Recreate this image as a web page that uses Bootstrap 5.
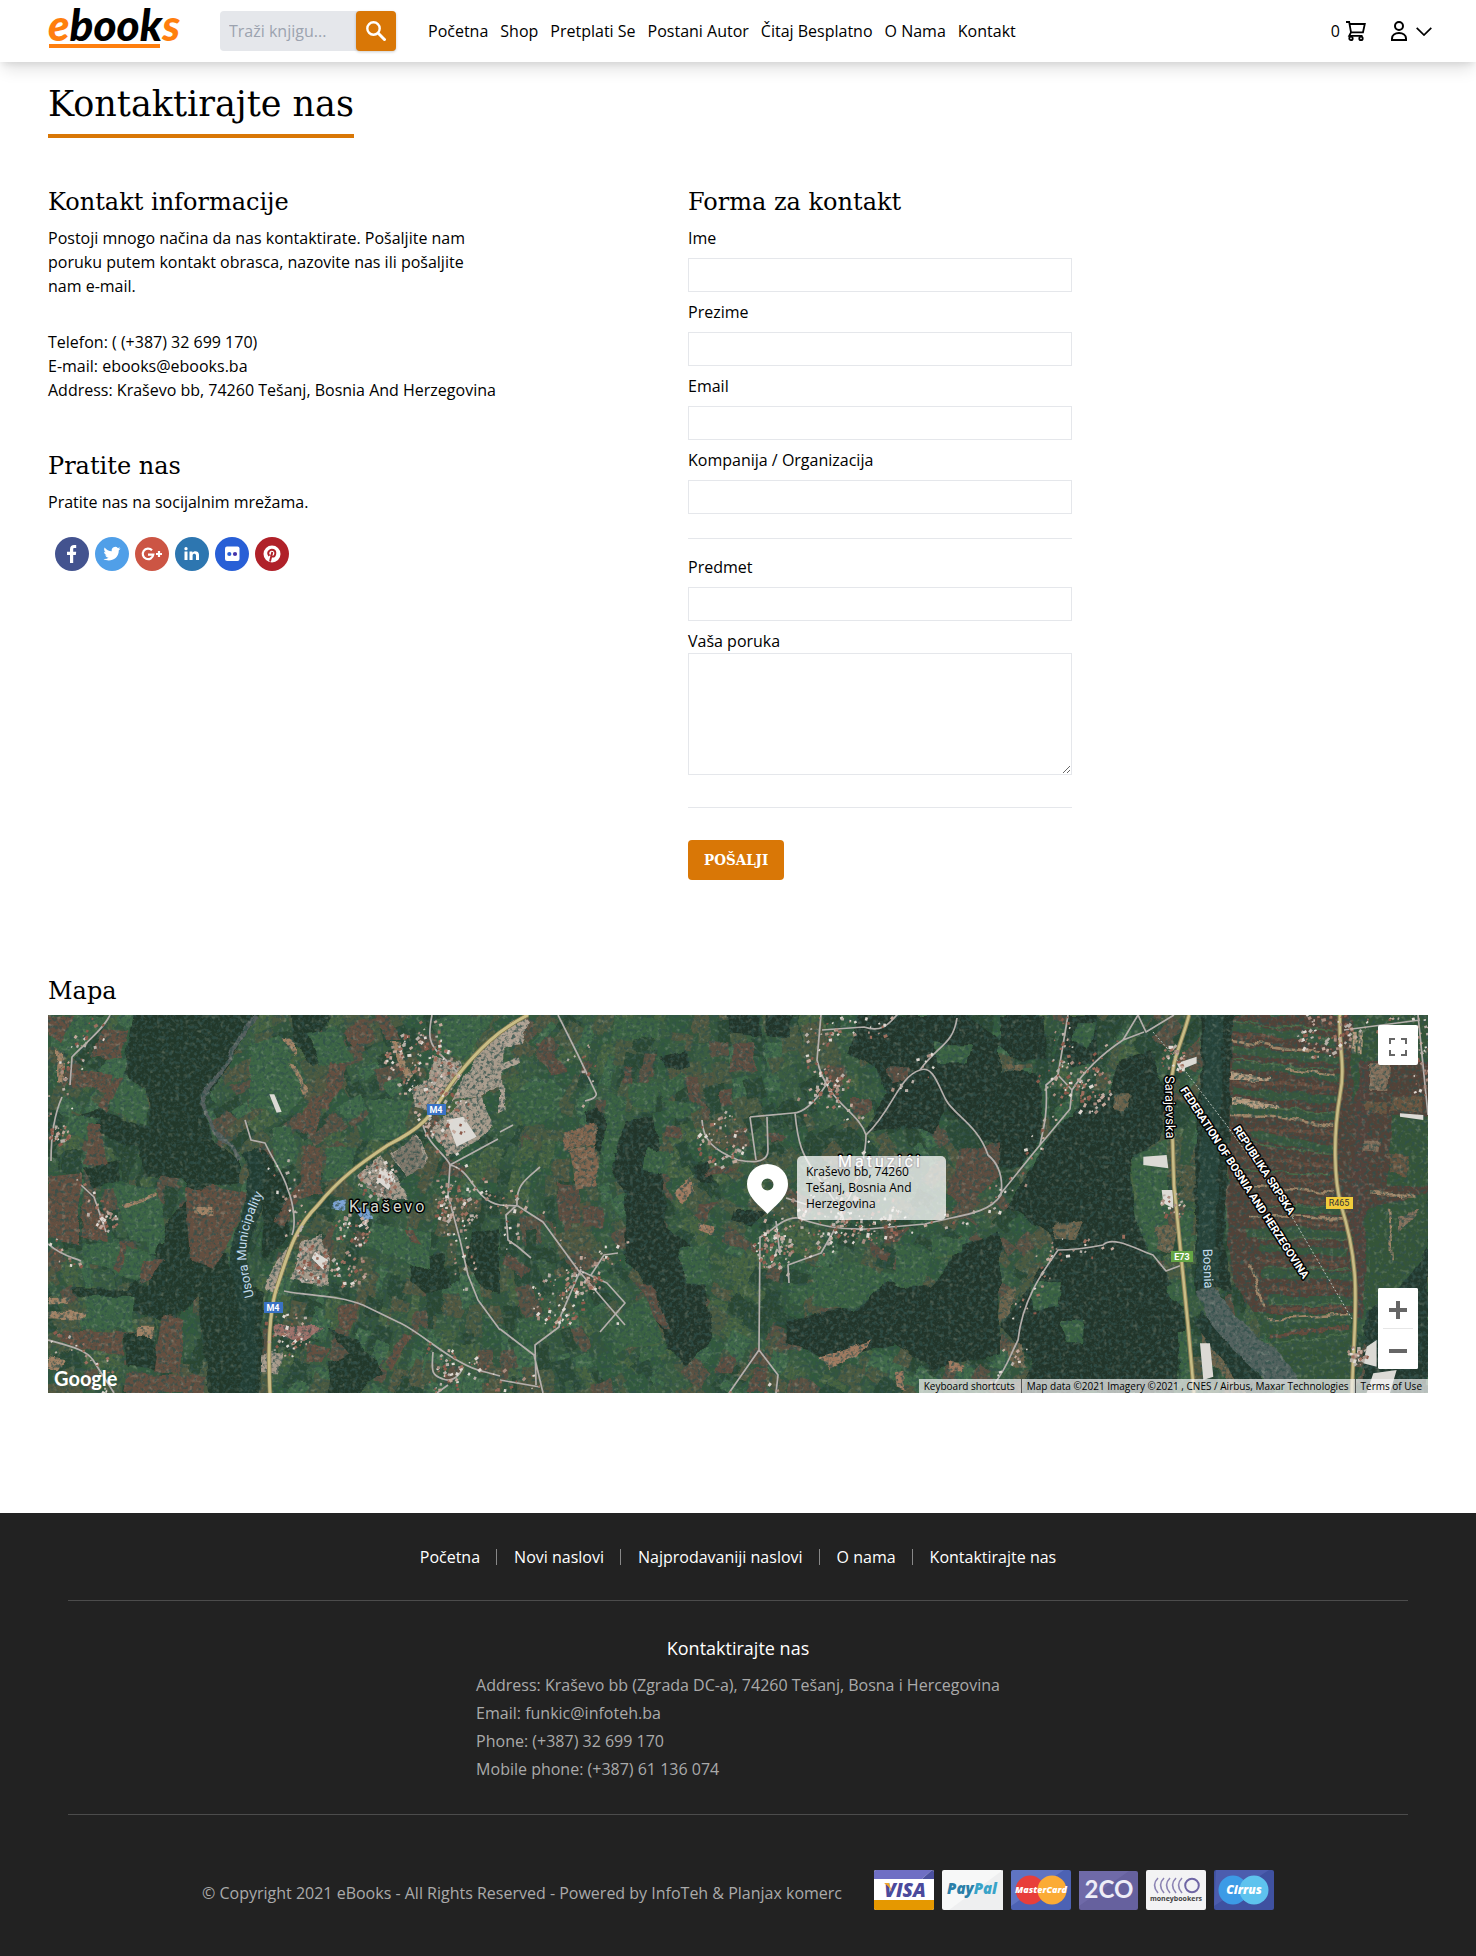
<!DOCTYPE html>
<html lang="bs">
<head>
<meta charset="utf-8">
<meta name="viewport" content="width=device-width, initial-scale=1">
<title>eBooks - Kontaktirajte nas</title>
<link href="https://cdn.jsdelivr.net/npm/bootstrap@5.3.0/dist/css/bootstrap.min.css" rel="stylesheet">
<style>
body{font-family:"Open Sans","Noto Sans",sans-serif;font-size:16px;line-height:24px;color:#000;background:#fff}
a{color:inherit;text-decoration:none}
.gutter{padding-left:48px;padding-right:48px}
.topbar{min-height:62px;box-shadow:0 10px 15px -3px rgba(0,0,0,.12),0 4px 6px -2px rgba(0,0,0,.08);background:#fff}
.logo{width:134px;height:62px;margin-right:38px}
.logo svg{display:block;overflow:visible}
.search{width:176px;height:40px;border-radius:4px;background:#e5e7eb;margin-right:32px}
.search input{width:136px;border:0;background:transparent;padding:0 9px;color:#000}
.search input::placeholder{color:#9ca3af;opacity:1}
.search button{width:40px;height:40px;border:0;border-radius:4px;background:#d97706;box-shadow:0 1px 3px rgba(0,0,0,.2)}
.menu{column-gap:12px}
.account{gap:24px;margin-right:-4px}
.basket{gap:6px}
.plain-btn{border:0;background:none;padding:0;color:inherit}
.serif,h1,h2{font-family:"DejaVu Serif",serif}
h1{font-size:35px;line-height:40px;font-weight:400;border-bottom:4px solid #d97706;padding-bottom:10px;margin:22px 0 48px}
h2{font-size:24px;line-height:32px;font-weight:400;margin:0 0 8px}
.cols{max-width:1280px}
.intro{max-width:440px;margin-bottom:32px}
.reach{margin-bottom:48px}
.social{gap:6px;margin:23px 0 0 7px}
.contact-form{max-width:384px}
.contact-form label{display:block}
.field{display:block;width:100%;height:34px;border:1px solid #e5e7eb;background:#fff;padding:0 8px;margin:8px 0}
.area{display:block;width:100%;height:122px;border:1px solid #e5e7eb;padding:8px}
.rule{border:0;border-top:1px solid #e5e7eb;opacity:1;margin:32px 0}
.rule-mid{margin:24px 0 16px}
.send{height:40px;border:0;border-radius:4px;background:#d97706;color:#fff;padding:0 16px;font-family:"DejaVu Serif Condensed","DejaVu Serif",serif;font-weight:700;font-size:15px}
.map-part{margin-top:95px;margin-bottom:120px}
.map-box{height:378px;background:#345139;overflow:hidden}
.map-box>.aerial{width:100%;height:100%}
.map-btn{width:40px;height:40px;border:0;background:#fff;padding:0}
.fs{top:10px;right:10px;border-radius:2px}
.zoomer{right:10px;bottom:24px;border-radius:2px;background:#fff;overflow:hidden}
.zoomer hr{margin:0 5px;opacity:1;border-color:#e6e6e6}
.pin{left:calc(50% + 9px);top:149px}
.bubble{left:calc(50% + 59px);top:141px;width:149px;height:64px;background:rgba(255,255,255,.75);border-radius:5px;padding:8px 9px;font-size:12px;line-height:16px}
.credit{right:0;bottom:0;height:14px;font-size:10px;line-height:14px;background:rgba(245,245,245,.7);padding:0 6px 0 5px}
.credit>*+*{border-left:1px solid #555;margin-left:6px;padding-left:5px}
.foot{background:#222;color:#aaa;padding:32px 68px 46px}
.foot-links a{color:#fff;padding:0 17px;position:relative}
.foot-links a+a::before{content:"";position:absolute;left:-1px;top:4px;height:16px;width:1px;background:#888}
.foot-rule{border:0;border-top:1px solid #4c4c4c;opacity:1;margin:31px 0 33px}
.foot h3{font-size:18px;line-height:28px;color:#fff;font-weight:400;margin:0 0 9px}
.foot address{line-height:28px;margin:0}
.foot-end{gap:32px;padding-top:22px}
.copy{padding-top:6px}
</style>
<script src="https://cdn.jsdelivr.net/npm/bootstrap@5.3.0/dist/js/bootstrap.bundle.min.js"></script>
</head>
<body>
<header class="topbar gutter d-flex flex-wrap align-items-center position-relative">
  <a href="#" class="logo" aria-label="ebooks">
    <svg width="134" height="62" viewBox="0 0 134 62"><text x="0" y="41" font-family="Lato,sans-serif" font-weight="900" font-style="italic" font-size="44"><tspan fill="#ff7f0e">e</tspan><tspan fill="#000">book</tspan><tspan fill="#ff7f0e">s</tspan></text><rect x="1" y="44" width="111" height="4" fill="#ff7f0e"/></svg>
  </a>
  <form class="search d-flex" role="search">
    <input type="text" placeholder="Traži knjigu..." aria-label="Traži knjigu">
    <button type="button" aria-label="Traži" class="d-flex align-items-center justify-content-center p-0"><svg width="20" height="20" viewBox="0 0 20 20" fill="none" stroke="#fff" stroke-width="2.400"><circle cx="7.500" cy="7.500" r="6.200"/><path d="M12 12l7.500 7.500" stroke-width="3"/></svg></button>
  </form>
  <nav class="menu d-flex flex-wrap me-auto">
    <a href="#">Početna</a><a href="#">Shop</a><a href="#">Pretplati Se</a><a href="#">Postani Autor</a><a href="#">Čitaj Besplatno</a><a href="#">O Nama</a><a href="#">Kontakt</a>
  </nav>
  <div class="account d-flex align-items-center">
    <a href="#" class="basket d-flex align-items-center" aria-label="Korpa">
      <span>0</span>
      <svg width="20" height="20" viewBox="0 0 20 20" fill="none" stroke="#000" stroke-width="1.800"><path d="M0 1H3.200L5 11.300M3.500 3H18.800L17 11.300H5L3.200 14.800H16.500"/><circle cx="5" cy="17.400" r="1.700"/><circle cx="15" cy="17.400" r="1.700"/></svg>
    </a>
    <button type="button" class="plain-btn d-flex align-items-center" aria-label="Moj račun">
      <svg width="18" height="20" viewBox="0 0 18 20" fill="none" stroke="#000" stroke-width="2"><circle cx="9" cy="5" r="4"/><path d="M2 19v-1.500C2 14 5 12 9 12s7 2 7 5.500V19z"/></svg>
      <svg class="ms-2" width="16" height="9" viewBox="0 0 16 9" fill="none" stroke="#000" stroke-width="1.700"><path d="M.7.8L8 8 15.300.8"/></svg>
    </button>
  </div>
</header>

<main class="gutter">
  <h1 class="d-table">Kontaktirajte nas</h1>
  <div class="row g-0 cols">
    <section class="col-md-6">
      <h2>Kontakt informacije</h2>
      <p class="intro">Postoji mnogo načina da nas kontaktirate. Pošaljite nam poruku putem kontakt obrasca, nazovite nas ili pošaljite nam e-mail.</p>
      <p class="reach">Telefon: ( (+387) 32 699 170)<br>E-mail: ebooks@ebooks.ba<br>Address: Kraševo bb, 74260 Tešanj, Bosnia And Herzegovina</p>
      <h2>Pratite nas</h2>
      <p class="mb-0">Pratite nas na socijalnim mrežama.</p>
      <div class="social d-flex">
        <a href="#" aria-label="Facebook" class="d-flex"><svg width="34" height="34" viewBox="0 0 34 34"><circle cx="17" cy="17" r="17" fill="#43538f"/><path fill="#fff" d="M15 26v-8h-3v-3.300h3v-2.400C15 9.300 16.800 8 19 8h2.200v3h-1.700c-1 0-1.300.5-1.300 1.400v2.300h3l-.4 3.300h-2.600v8z"/></svg></a>
        <a href="#" aria-label="Twitter" class="d-flex"><svg width="34" height="34" viewBox="0 0 34 34"><circle cx="17" cy="17" r="17" fill="#509fe8"/><path fill="#fff" d="M25.500 11.500c-.6.300-1.300.5-2 .6.700-.5 1.200-1.100 1.500-1.900-.7.400-1.400.7-2.200.8a3.500 3.500 0 0 0-6 3.200c-2.900-.1-5.500-1.500-7.200-3.700-.9 1.600-.5 3.600 1.100 4.700-.6 0-1.100-.2-1.600-.4 0 1.700 1.200 3.100 2.800 3.400-.5.100-1 .2-1.600.1.500 1.400 1.700 2.400 3.300 2.400A7 7 0 0 1 8.500 22c5.500 3.500 15.300.8 15.300-8.700.7-.5 1.300-1.100 1.700-1.800z"/></svg></a>
        <a href="#" aria-label="Google Plus" class="d-flex"><svg width="34" height="34" viewBox="0 0 34 34"><circle cx="17" cy="17" r="17" fill="#cc5544"/><g fill="none" stroke="#fff" stroke-width="2.200"><path d="M17 13.300a5.300 5.300 0 1 0 1.300 4.300h-5.300"/><path d="M24 14v6M21 17h6"/></g></svg></a>
        <a href="#" aria-label="LinkedIn" class="d-flex"><svg width="34" height="34" viewBox="0 0 34 34"><circle cx="17" cy="17" r="17" fill="#2d76b0"/><path fill="#fff" d="M9.500 14.500h3V23h-3zM11 10a1.600 1.600 0 1 1 0 3.300A1.600 1.600 0 0 1 11 10zM14.500 14.500h2.900v1.300c1.500-2.400 6.600-2 6.600 2V23h-3v-4.700c0-2.200-3.400-2.200-3.400 0V23h-3.100z"/></svg></a>
        <a href="#" aria-label="Flickr" class="d-flex"><svg width="34" height="34" viewBox="0 0 34 34"><circle cx="17" cy="17" r="17" fill="#285fd6"/><rect x="10" y="9.500" width="14.500" height="14.500" rx="2" fill="#fff"/><circle cx="14.300" cy="17" r="2.100" fill="#285fd6"/><circle cx="20" cy="17" r="2.100" fill="#43a"/></svg></a>
        <a href="#" aria-label="Pinterest" class="d-flex"><svg width="34" height="34" viewBox="0 0 34 34"><circle cx="17" cy="17" r="17" fill="#b02129"/><circle cx="17" cy="17" r="8.500" fill="#fff"/><path fill="none" stroke="#b02129" stroke-width="1.900" d="M14.300 18.800c-3-3.900 1-6.900 4-5.800 3.300 1.200 2.200 6.700-.7 6.600-1.100 0-1.700-.8-1.500-1.500M17.300 15l-2.300 9.500"/></svg></a>
      </div>
    </section>
    <section class="col-md-6">
      <h2>Forma za kontakt</h2>
      <form class="contact-form">
        <label for="ime">Ime</label><input class="field" id="ime" type="text">
        <label for="prezime">Prezime</label><input class="field" id="prezime" type="text">
        <label for="email">Email</label><input class="field" id="email" type="email">
        <label for="firma">Kompanija / Organizacija</label><input class="field mb-0" id="firma" type="text">
        <hr class="rule rule-mid">
        <label for="predmet">Predmet</label><input class="field" id="predmet" type="text">
        <label for="poruka">Vaša poruka</label><textarea class="area" id="poruka"></textarea>
        <hr class="rule">
        <button type="button" class="send">POŠALJI</button>
      </form>
    </section>
  </div>

  <section class="map-part">
    <h2>Mapa</h2>
    <div class="map-box position-relative">
      <svg class="aerial" viewBox="0 0 1380 378" preserveAspectRatio="xMidYMid slice" aria-label="Mapa Kraševa">
        <defs>
          <filter id="rough" x="0" y="0" width="100%" height="100%"><feTurbulence type="fractalNoise" baseFrequency=".05" numOctaves="3" seed="4" result="n"/><feDisplacementMap in="SourceGraphic" in2="n" scale="9" xChannelSelector="R" yChannelSelector="G"/></filter>
          <filter id="grain" x="0" y="0" width="100%" height="100%"><feTurbulence type="fractalNoise" baseFrequency=".28" numOctaves="3" seed="2"/><feColorMatrix values="0 0 0 0 .03  0 0 0 0 .08  0 0 0 0 .07  2.600 2.600 0 0 -2.450"/></filter>
          <filter id="glint" x="0" y="0" width="100%" height="100%"><feTurbulence type="fractalNoise" baseFrequency=".22" numOctaves="2" seed="15"/><feColorMatrix values="0 0 0 0 .48  0 0 0 0 .52  0 0 0 0 .42  2 2 0 0 -2.100"/></filter>
          <path id="usora" d="M206 282C198 250 196 235 201 215S212 188 217 172"/>
        </defs>
        <rect width="1380" height="378" fill="#34563c"/>

        <g filter="url(#rough)">
          <g id="parcels"></g>
          <!-- western part -->
          <g transform="translate(-48 -55) scale(.3333)">
            <path fill="#22382b" d="M400 150H780L700 290 640 380 600 430 640 540 720 600 720 670 560 690 540 650 430 650 420 560 330 540 300 510 210 470 300 450 450 500 440 380 370 340zM870 150H1010L960 210 990 270 1060 300 940 320 880 240zM490 800 560 720 570 900 680 880 700 960 790 1000 780 1310H630L600 1080 590 1000 560 1050 480 1080 380 1040 220 1000 220 980 380 990 400 960 440 980zM370 1120 460 1110 480 1230 380 1220zM1240 900 1330 880 1350 980 1280 1000 1230 960zM980 1100 1080 1150 1150 1240 1060 1310 980 1299 990 1210 1050 1180zM1420 820 1500 800V1000L1440 980 1400 900zM250 620 350 600 350 660 280 690zM780 560 860 640 870 820 790 900z"/>
            <path fill="#3c6644" d="M150 170 330 165 310 190 220 290 150 260zM350 350 440 380 440 490 330 450zM210 460 300 480 260 540 190 520zM750 250 850 230 910 400 860 470 750 440zM1110 420 1230 420 1220 540 1120 540zM820 500 880 500 890 610 830 630zM980 560 1070 560 1060 650 970 660zM330 670 470 680 500 850 390 840zM250 850 360 840 350 930 250 910zM1020 760 1060 780 1030 850 1000 840zM1110 790 1290 820 1290 930 1100 860zM260 1010 400 1010 400 1110 250 1110zM380 860 470 890 400 960 340 940zM920 220 1010 200 1060 300 960 320zM1310 170 1480 165 1400 300 1310 280z"/>
            <path fill="#655041" d="M310 205 385 210 365 295 270 290zM215 320 335 345 320 400 210 375zM340 350 370 350 320 460 300 440zM265 495 300 495 320 610 255 610zM990 310 1045 310 990 450 960 440zM930 410 980 410 940 530 890 500zM1030 220 1100 180 1130 240 1060 270zM1120 165 1160 165 1200 240 1160 240zM555 685 640 680 740 700 690 840 640 930 570 900zM910 560 960 560 970 700 900 720 850 800 820 790 900 660zM145 650 240 640 240 850 145 830zM255 700 320 770 320 840 245 830zM360 850 380 850 360 940 340 920zM430 900 490 900 450 960 410 960zM490 1060 550 1080 540 1240 460 1230zM190 1110 370 1120 370 1190 180 1150zM1210 1120 1235 1130 1180 1230 1160 1210zM1210 810 1240 810 1270 850 1240 850zM920 1150 990 1160 970 1210 920 1200zM150 170 220 170 180 250 145 230zM380 1240 620 1250 610 1299 370 1299zM1020 1040 1080 1030 1050 1110 1020 1100z"/>
            <path fill="#a18265" d="M168 275 190 275 188 375 168 370zM1170 245 1195 245 1240 350 1225 370zM850 235 875 240 890 290 870 280zM868 310 885 315 925 400 915 410zM580 740 640 740 640 765 580 760zM410 1100 460 1100 460 1135 410 1130zM145 1055 260 1055 255 1080 145 1075zM370 735 470 700 470 710 380 745zM150 1010 200 1010 200 1030 145 1030zM150 1190 190 1200 170 1230 145 1230z"/>
            <path fill="#a89b8c" d="M1300 290 1380 310 1390 340 1350 400 1290 450 1240 440 1240 390 1290 350zM1440 270 1510 200V380L1350 430zM1380 430 1440 400 1480 500 1420 550 1340 590 1320 540 1290 510zM1170 580 1250 530 1290 600 1220 650zM1070 650 1140 590 1230 720 1150 720zM900 850 960 830 990 900 980 980 870 960zM830 900 870 850 830 1000 790 990zM780 1180 850 1180 840 1240 780 1240z"/>
            <path fill="#7e776b" d="M1180 580 1240 530 1280 610 1220 650zM1130 650 1180 690 1150 710 1110 680zM930 880 980 880 980 930 920 920z"/>
            <path fill="#7ba3d6" d="M1060 740 1110 750 1120 780 1090 780zM1000 730 1030 720 1030 750 990 745z"/>
            <path fill="#9d6f69" d="M830 1090 970 1100 910 1140 830 1130z"/>
            <path fill="none" stroke="#56615f" stroke-width="13" d="M765 165 690 290 625 380 605 430 640 510 700 560 720 600"/>
            <path fill="none" stroke="#213d30" stroke-width="48" stroke-linejoin="round" d="M750 570 770 640 760 740 720 850 715 930 745 1040 745 1299"/>
          </g>
          <!-- central part -->
          <g transform="translate(452 -55) scale(.3333)">
            <path fill="#20362b" d="M1080 165H1400L1500 240V560L1430 530 1340 440 1300 520 1180 500 1100 520 1160 400 1140 330 1040 280zM380 480 460 470 480 600 500 790 600 900 640 1130 560 1220 500 1160 430 960 370 880 380 700 330 620zM1380 860 1500 820V1180L1300 1230 1180 1150 1000 1200 860 1150 860 1080 1060 1040 1100 960 1290 980zM680 165 780 165 790 230 690 220zM480 290 560 270 570 320 500 320zM580 620 630 610 640 670 590 660zM250 460 290 440 340 480 300 580zM700 750 800 750 760 800 690 780zM800 165 880 165 870 230 800 230z"/>
            <path fill="#3b6443" d="M30 400 180 370 190 480 70 500zM340 170 480 180 470 230 340 240zM320 390 380 410 350 590 310 580zM380 360 470 370 470 450 390 440zM500 420 610 440 540 480 500 470zM440 560 520 580 500 640 430 630zM540 870 620 850 640 980 560 970zM1190 850 1300 880 1270 980 1180 980zM940 930 1070 900 1170 960 1060 1050 940 1040zM1300 250 1420 250 1400 310 1310 310zM60 1080 180 1060 170 1110 60 1140zM330 1070 460 1000 480 1150 340 1180zM870 970 960 970 910 1040 870 1030zM1290 830 1390 830 1390 880 1300 890zM470 380 550 330 570 370 490 430zM420 1170 500 1150 500 1180 420 1210z"/>
            <path fill="#5f4e3f" d="M105 250 140 250 200 340 160 350zM370 330 400 320 400 370 370 370zM550 350 590 350 600 420 570 430zM660 400 690 390 700 430 660 430zM500 490 550 500 550 540 490 530zM600 730 660 730 610 780 580 770zM1160 330 1230 320 1220 360 1170 370zM1050 420 1110 420 1110 460 1060 460zM170 670 240 680 240 790 180 780zM250 740 310 740 310 800 250 800zM400 970 460 970 510 1110 490 1110 430 1000zM1150 810 1230 800 1180 850 1150 850zM1110 850 1170 880 1160 900 1120 890zM640 620 720 620 690 640 610 650zM20 880 90 930 70 950 10 910zM700 250 760 250 770 330 690 340zM1380 570 1500 550V650L1380 740 1340 700zM760 1230 800 1230 800 1299 740 1299zM800 520 860 530 850 550 810 550zM660 1190 710 1180 700 1240 640 1240z"/>
            <path fill="#84664f" d="M190 520 290 490 290 545 200 570zM210 570 290 550 290 680 225 690z"/>
            <path fill="#a07a60" d="M520 700 570 650 590 690 540 730zM590 790 650 800 640 825 590 810zM960 1190 1110 1140 1070 1190 990 1230zM1185 1240 1210 1235 1220 1290 1190 1280zM1345 1205 1390 1220 1390 1240 1350 1240z"/>
            <path fill="#b0a294" d="M0 210 70 170 90 190 60 250 0 260zM5 310 65 285 70 300 10 330zM0 380 12 380 20 450 0 460z"/>
          </g>
          <!-- eastern part with the Bosna river -->
          <g transform="translate(952 -55) scale(.3333)">
            <path fill="#20362b" d="M0 165H130L140 300 60 310 0 260zM0 330 110 340 130 400 120 540 60 620 0 620zM130 560 220 450 330 400 360 300 450 270 500 400 480 540 390 590 400 740 440 880 160 880 150 820 20 740zM160 880 300 850 420 870 500 940 520 1000 560 1080 520 1299H60L100 1200 0 1100 100 960zM200 165H290L290 300 210 330 190 280zM600 165 700 165 690 480 670 830 700 1000 640 980 590 1000 580 700 600 300z"/>
            <path fill="#3b6443" d="M230 190 290 190 270 270 220 240zM390 590 500 540 510 860 440 880zM180 1080 250 1080 250 1150 200 1150zM90 970 180 960 170 1040 100 1050zM540 760 580 750 570 880 545 880zM170 440 220 400 210 470 170 490zM500 980 550 960 560 1050 510 1020zM530 1110 580 1110 580 1260 540 1260z"/>
            <path fill="#6e634b" d="M345 400 390 400 370 450 340 440zM170 790 250 780 220 840 160 840zM460 800 540 790 520 880 470 860zM20 1150 60 1150 80 1220 30 1220zM5 1010 40 980 30 1060 0 1090zM10 310 80 320 60 340 20 330zM600 1070 700 1190 670 1250 610 1180zM680 1210 720 1200 800 1299H670z"/>
            <path fill="#524338" d="M700 165H1284V830H1050L1060 1060H760L700 960 680 800 690 400z"/>
            <path fill="#345539" d="M1050 165H1284V300H1110L1060 420zM1180 470 1284 470V680H1160zM1080 740 1284 700V870L1100 1070zM760 1060 1060 1060 1050 1299H900z"/>
            <g fill="none" stroke="#38593d" stroke-width="24"><path d="M700 200 1010 245M700 270 1020 300M700 320 860 325 1020 360M700 395 1010 420M690 450 1010 475M750 520 1000 570M860 750 1030 750M740 820 1050 820M780 860 1040 880M780 940 1060 950M800 1020 1060 1020M790 1090 1060 1070M820 1170 1060 1130M870 1230 1050 1200"/></g>
            <g fill="none" stroke="#664b3d" stroke-width="12"><path d="M700 225 850 235M700 365 1010 385M690 505 1000 520M700 590 1000 620M690 650 1000 670M760 720 1000 730M760 790 1040 790M780 905 1040 910M800 985 1050 985M810 1050 1050 1040M810 1130 1050 1100"/></g>
            <g fill="none" stroke="#496b47" stroke-width="5"><path d="M700 185 1000 215M700 300 1010 330M700 435 1010 460M740 545 1000 585M700 630 990 645M760 735 1000 740M770 835 1040 835M790 925 1050 930M800 1035 1050 1030M820 1150 1050 1120"/></g>
            <g fill="none" stroke="#a08568" stroke-width="8"><path d="M695 348 810 358M695 243 960 278M850 322 1010 348M690 465 820 468 1000 503M740 680 1000 696M750 768 1030 772M800 1080 1050 1062M750 910 790 1040M1110 700 1250 706M1170 740 1178 910"/></g>
            <path fill="#b59a7e" d="M690 418 838 432 838 445 690 440zM695 340 810 350 810 360 695 356zM1055 215H1067V280H1055zM1073 215H1085V280H1073z"/>
            <path fill="#54433a" d="M1080 300H1110L1090 1080H1070L1050 700z"/>
            <path fill="#85705b" d="M1110 310 1170 310 1165 390 1110 390zM1090 545 1140 545 1135 575 1090 575zM1200 770 1260 750 1200 820z"/>
            <path fill="#6b5540" d="M1170 410 1270 410 1270 450 1170 460zM1095 420 1160 430 1160 460 1095 450zM1160 580 1230 590 1220 650 1170 640z"/>
            <path fill="none" stroke="#284339" stroke-width="60" stroke-linejoin="round" d="M640 150 635 480 620 760 620 960"/>
            <path fill="#52625f" d="M590 990 640 980 700 1060 790 1140 860 1200 900 1270 830 1280 760 1230 690 1170 630 1100z"/>
            <path fill="#22392f" d="M600 1050 720 1190 830 1299H740L650 1180 590 1100zM1284 860V1299H1250L1090 1290 1100 1060 1220 960z"/>
          </g>
        </g>
        <rect width="1380" height="378" filter="url(#glint)" opacity=".3"/>
        <rect width="1380" height="378" filter="url(#grain)" opacity=".75"/>

        <!-- large roofs and sheds -->
        <g fill="#dcdad5">
          <path transform="translate(-48 -55) scale(.3333)" d="M1340 480 1390 470 1430 530 1370 560zM1140 630 1185 650 1165 690 1130 660zM945 875 985 900 970 930 935 895zM808 403 823 403 845 455 830 458z"/>
          <path transform="translate(952 -55) scale(.3333)" d="M430 590 500 585 505 625 430 615zM485 690 520 690 520 745 490 730zM1100 1160 1130 1140 1130 1220 1090 1210zM1120 1240 1190 1230 1170 1299H1100zM600 1150 630 1150 640 1250 610 1260zM530 310 590 290 590 310 540 330zM1200 460 1270 465 1270 480 1200 470z"/>
        </g>

        <!-- roads -->
        <g fill="none" stroke-linejoin="round">
          <g id="lanes" stroke="#b5afac" stroke-width="1.700">
            <path d="M62 0C55 15 35 30 24 42L22 70M14 82C6 100 3 120 3 146M33 170 46 182 58 217M0 229C15 242 25 242 33 246M0 325C25 332 38 335 45 345L66 378M197 105 203 125 217 128C225 145 236 160 240 175 246 190 248 210 244 220"/>
            <path d="M384 0C380 20 380 30 395 42L412 60M375 110C380 130 400 142 402 150L450 124M402 150 400 180 412 225 420 260 430 285 452 315M402 150C425 155 425 185 452 190M236 276C260 281 290 280 315 290L350 307C370 315 400 345 430 355L452 361M385 337C383 360 385 360 395 364S412 360 415 352M389 378 400 370"/>
            <path d="M510 0 530 40 548 78Q550 83 537 86M452 190 470 191 495 207 530 255 577 310M533 254 513 300 511 312 487 330 488 370M452 314 486 340 495 378M452 365 492 372M533 256 559 268 577 288 552 317M543 260 556 240 570 238M469 190C468 170 477 165 492 152M469 190 458 200 460 225 470 232 483 243M452 117 465 110"/>
            <path d="M773 0 769 45C780 90 810 95 818 120 818 140 812 160 800 185L792 205M774 15 816 12C840 20 845 0 855 -5M909 3C905 30 890 30 872 55 850 62 845 95 818 120M872 55C885 50 890 70 898 85S930 110 940 140C952 150 955 165 953 180 940 200 910 200 877 209L820 214C790 215 770 210 750 203 735 201 720 220 712 222L711 335 681 378M711 335 730 360 728 378M778 70C765 90 755 98 745 98L702 102M702 102 708 145M719 102 720 135C720 150 700 147 690 145 665 135 655 125 654 105M747 98C750 130 755 140 765 155L793 195 797 210M787 214 773 238 740 250 741 268M728 206 732 240M738 183 760 190"/>
            <path d="M1020 0 1010 60 998 70C1000 100 995 115 992 130L950 182M1010 60 1024 75 1022 94 992 130M1024 75C1040 50 1060 35 1075 25L1090 0 1098 17 1126 0M1096 17 1075 25M947 368C960 350 960 345 970 325 975 280 1000 250 1010 235 1025 235 1045 232 1055 230 1065 220 1090 235 1105 240L1118 256 1134 250M1296 15 1372 5M1370 0 1380 100"/>
          </g>
          <g stroke="#8c8156" stroke-width="4.500"><path id="m4" d="M222 378C220 340 221 300 228 275 240 240 245 215 270 190 290 165 310 150 340 130 390 105 385 90 410 60 430 35 450 15 480 0"/><path id="e73" d="M1141 0C1135 25 1123 45 1123 75L1126 170 1140 310 1146 378"/><path id="r465" d="M1292 0C1290 30 1298 50 1292 80 1285 120 1286 165 1293 190 1315 260 1306 300 1304 378"/></g>
          <g stroke="#c9bd86" stroke-width="2.500"><use href="#m4"/><path d="M222 378C220 340 221 300 228 275 240 240 245 215 270 190 290 165 310 150 340 130 390 105 385 90 410 60 430 35 450 15 480 0M1141 0C1135 25 1123 45 1123 75L1126 170 1140 310 1146 378M1292 0C1290 30 1298 50 1292 80 1285 120 1286 165 1293 190 1315 260 1306 300 1304 378"/></g>
          <path d="M1105 17 1125 40 1180 112 1243 200 1304 304" stroke="#b8c0b8" stroke-dasharray="2 2"/>
        </g>
        <g id="houses"></g>

        <!-- road shields -->
        <g font-family="Roboto,sans-serif" font-size="9" font-weight="700" fill="#fff" text-anchor="middle">
          <rect x="379" y="89" width="19" height="11" fill="#3a72c4"/><text x="388" y="98">M4</text>
          <rect x="216" y="287" width="19" height="11" fill="#3a72c4"/><text x="225" y="296">M4</text>
          <rect x="1123" y="236" width="22" height="11" fill="#65a544"/><text x="1134" y="245">E73</text>
          <rect x="1278" y="182" width="27" height="12" fill="#f2cc3b"/><text x="1291" y="191" fill="#333" font-weight="400">R465</text>
        </g>

        <!-- place labels -->
        <g font-family="Roboto,sans-serif" fill="#fff" stroke="#000" stroke-width="3" stroke-linejoin="round" paint-order="stroke">
          <text x="301" y="197" font-size="16" letter-spacing="3" fill="#d8d8d0">Kraševo</text>
          <text x="790" y="152" font-size="16" letter-spacing="3">Matuzići</text>
          <text transform="translate(1117 61) rotate(89)" font-size="13">Sarajevska</text>
          <text transform="translate(1132 75) rotate(57)" font-size="11" font-weight="700">FEDERATION OF BOSNIA AND HERZEGOVINA</text>
          <text transform="translate(1185 114) rotate(57)" font-size="11" font-weight="700">REPUBLIKA SRPSKA</text>
        </g>
        <g font-family="Roboto,sans-serif" fill="#c3dcec" stroke="#27443c" stroke-width="2" paint-order="stroke">
          <text font-size="13"><textPath href="#usora">Usora Municipality</textPath></text>
          <text transform="translate(1155 234) rotate(88)" font-size="13">Bosnia</text>
        </g>
        <text x="6" y="371" font-family="Lato,sans-serif" font-size="20" font-weight="700" fill="#fff">Google</text>
      </svg>
      <svg class="pin position-absolute" width="41" height="50" viewBox="0 0 41 50"><path fill="#fff" fill-rule="evenodd" d="M20.500 50C12 41 0 33 0 20a20.500 20 0 0 1 41 0C41 33 29 41 20.500 50zM20.500 14.500a6 6 0 1 0 0 12 6 6 0 0 0 0-12z"/></svg>
      <div class="bubble position-absolute">Kraševo bb, 74260 Tešanj, Bosnia And Herzegovina</div>
      <button type="button" class="map-btn fs position-absolute" aria-label="Cijeli ekran"><svg width="18" height="18" viewBox="0 0 18 18" fill="none" stroke="#666" stroke-width="2"><path d="M1 6V1h5M12 1h5v5M17 12v5h-5M6 17H1v-5"/></svg></button>
      <div class="zoomer position-absolute d-flex flex-column">
        <button type="button" class="map-btn" aria-label="Uvećaj"><svg width="18" height="18" viewBox="0 0 18 18" fill="none" stroke="#666" stroke-width="4"><path d="M9 0v18M0 9h18"/></svg></button>
        <hr>
        <button type="button" class="map-btn" aria-label="Umanji"><svg width="18" height="18" viewBox="0 0 18 18" fill="none" stroke="#666" stroke-width="4"><path d="M0 9h18"/></svg></button>
      </div>
      <div class="credit position-absolute d-flex">
        <button type="button" class="plain-btn">Keyboard shortcuts</button><span>Map data ©2021 Imagery ©2021 , CNES / Airbus, Maxar Technologies</span><a href="#">Terms of Use</a>
      </div>
    </div>
  </section>
</main>

<footer class="foot">
  <nav class="foot-links d-flex flex-wrap justify-content-center">
    <a href="#">Početna</a><a href="#">Novi naslovi</a><a href="#">Najprodavaniji naslovi</a><a href="#">O nama</a><a href="#">Kontaktirajte nas</a>
  </nav>
  <hr class="foot-rule">
  <h3 class="text-center">Kontaktirajte nas</h3>
  <address class="d-table mx-auto">Address: Kraševo bb (Zgrada DC-a), 74260 Tešanj, Bosna i Hercegovina<br>Email: funkic@infoteh.ba<br>Phone: (+387) 32 699 170<br>Mobile phone: (+387) 61 136 074</address>
  <hr class="foot-rule">
  <div class="foot-end d-flex flex-wrap justify-content-center align-items-center">
    <span class="copy">© Copyright 2021 eBooks - All Rights Reserved - Powered by InfoTeh &amp; Planjax komerc</span>
    <svg width="400" height="40" viewBox="0 0 400 40" role="img" aria-label="Načini plaćanja" font-family="'Open Sans',sans-serif" text-anchor="middle">
      <g><rect width="60" height="40" rx="2" fill="#fff"/><path fill="#6f6fc4" d="M2 0H58L48 9H0V2Q0 0 2 0z"/><path fill="#4c519f" d="M58 0Q60 0 60 2V9H48z"/><path fill="#e59800" d="M0 30H60V38Q60 40 58 40H2Q0 40 0 38z"/><text x="31" y="27" font-size="19" font-weight="800" font-style="italic" fill="#4b4a9c">VISA</text><path fill="#f0a62c" d="M10 13h5l3 9q-3-6-8-9z"/></g>
      <g><rect x="68" width="61" height="40" rx="2" fill="#f7f8f8"/><path fill="#eeeff0" d="M129 0V40H75z"/><text x="98" y="24" font-size="15" font-weight="800" font-style="italic"><tspan fill="#2a7fa8">Pay</tspan><tspan fill="#38a3c8">Pal</tspan></text></g>
      <g><rect x="137" width="60" height="40" rx="2" fill="#4c62b4"/><path fill="#5f74c2" d="M139 0H190L137 36V2z"/><circle cx="156" cy="20" r="14.500" fill="#e83e3b"/><circle cx="178" cy="20" r="14.500" fill="#fbab35"/><text x="167" y="23" font-size="9" font-weight="800" font-style="italic" fill="#fff">MasterCard</text></g>
      <g><rect x="205" y="1" width="59" height="39" rx="2" fill="#66619e"/><path fill="#6f6aa8" d="M205 1H255L205 36z"/><text x="235" y="28" font-family="Lato,sans-serif" font-size="24" font-weight="700" fill="#eeedf7">2CO</text></g>
      <g><rect x="272" width="60" height="40" rx="2" fill="#f3f3f4"/><g fill="none" stroke="#8c84b4" stroke-width="1.600"><path d="M284 8q-7 7 0 15M290 8q-7 7 0 15M296 8q-7 7 0 15M302 8q-7 7 0 15M308 8q-7 7 0 15"/><circle cx="318" cy="15.500" r="6.800" stroke="#6f66a5" stroke-width="2"/></g><text x="302" y="31" font-size="7" font-weight="700" fill="#444">moneybookers</text></g>
      <g><rect x="340" width="60" height="40" rx="2" fill="#3f51a0"/><path fill="#4c5dae" d="M342 0H395L340 36z"/><circle cx="359" cy="20" r="14.500" fill="#3c9be6"/><circle cx="380" cy="20" r="14.500" fill="#5ec3ee"/><text x="370" y="24" font-size="12" font-weight="800" font-style="italic" fill="#fff">Cirrus</text></g>
    </svg>
  </div>
</footer>
<script>
// Small parcels and houses of the aerial picture, from a fixed seed
(function(){
  var seed=7,ns='http://www.w3.org/2000/svg';
  function rnd(){seed=(seed*16807)%2147483647;return seed/2147483647}
  function box(parent,x,y,w,h,a,fill){
    var r=document.createElementNS(ns,'rect');
    r.setAttribute('x',-w/2);r.setAttribute('y',-h/2);r.setAttribute('width',w);r.setAttribute('height',h);
    r.setAttribute('fill',fill);r.setAttribute('transform','translate('+x+' '+y+') rotate('+a+')');
    parent.appendChild(r);
  }
  var parcels=document.getElementById('parcels'),land=['#3a5d40','#2c4a35','#46633f','#52583f','#335a3d','#2a4633','#5c5142','#3f6a48','#4b5a41'];
  for(var x=0;x<1400;x+=19)for(var y=0;y<390;y+=17)
    box(parcels,x+rnd()*12,y+rnd()*12,8+rnd()*16,14+rnd()*22,Math.sin(x/170)*45+Math.cos(y/90)*30,land[Math.floor(rnd()*land.length)]);
  var houses=document.getElementById('houses'),roofs=['#c4a99c','#9d6f5e','#e0d9d2','#a98d80','#b9b0a8','#8c5b4c'];
  document.querySelectorAll('#lanes path').forEach(function(p){
    var len=p.getTotalLength();
    for(var d=0;d<len;d+=2){
      var q=p.getPointAtLength(d),dense=Math.sin(q.x/31+1)+Math.sin(q.y/27)+.35;
      if(rnd()*2.2>dense)continue;
      var s=1.2+rnd()*1.8;
      box(houses,q.x+(rnd()-.5)*24,q.y+(rnd()-.5)*22,s,s*(1+rnd()*.5),rnd()*90,roofs[Math.floor(rnd()*roofs.length)]);
    }
  });
  // dense settlements: centre x, centre y, radius, number of houses
  [[370,50,34,110],[395,100,28,90],[330,165,20,60],[265,250,20,60],[240,318,24,40],[305,215,18,45],[300,255,18,40],[725,235,20,80],[675,125,28,60],[785,70,18,45],[820,205,34,60],[510,285,28,70],[535,262,20,50],[1040,75,24,60],[1280,15,32,90],[1125,45,14,30],[12,120,10,30],[60,205,12,30],[410,190,24,60],[1310,340,10,30],[1125,190,14,25]].forEach(function(c){
    for(var i=0;i<c[3];i++){
      var a=rnd()*6.28,r=Math.sqrt(rnd())*c[2],s=1.2+rnd()*2;
      box(houses,c[0]+Math.cos(a)*r,c[1]+Math.sin(a)*r,s,s*(1+rnd()*.6),rnd()*90,roofs[Math.floor(rnd()*roofs.length)]);
    }
  });
})();
</script>
</body>
</html>
